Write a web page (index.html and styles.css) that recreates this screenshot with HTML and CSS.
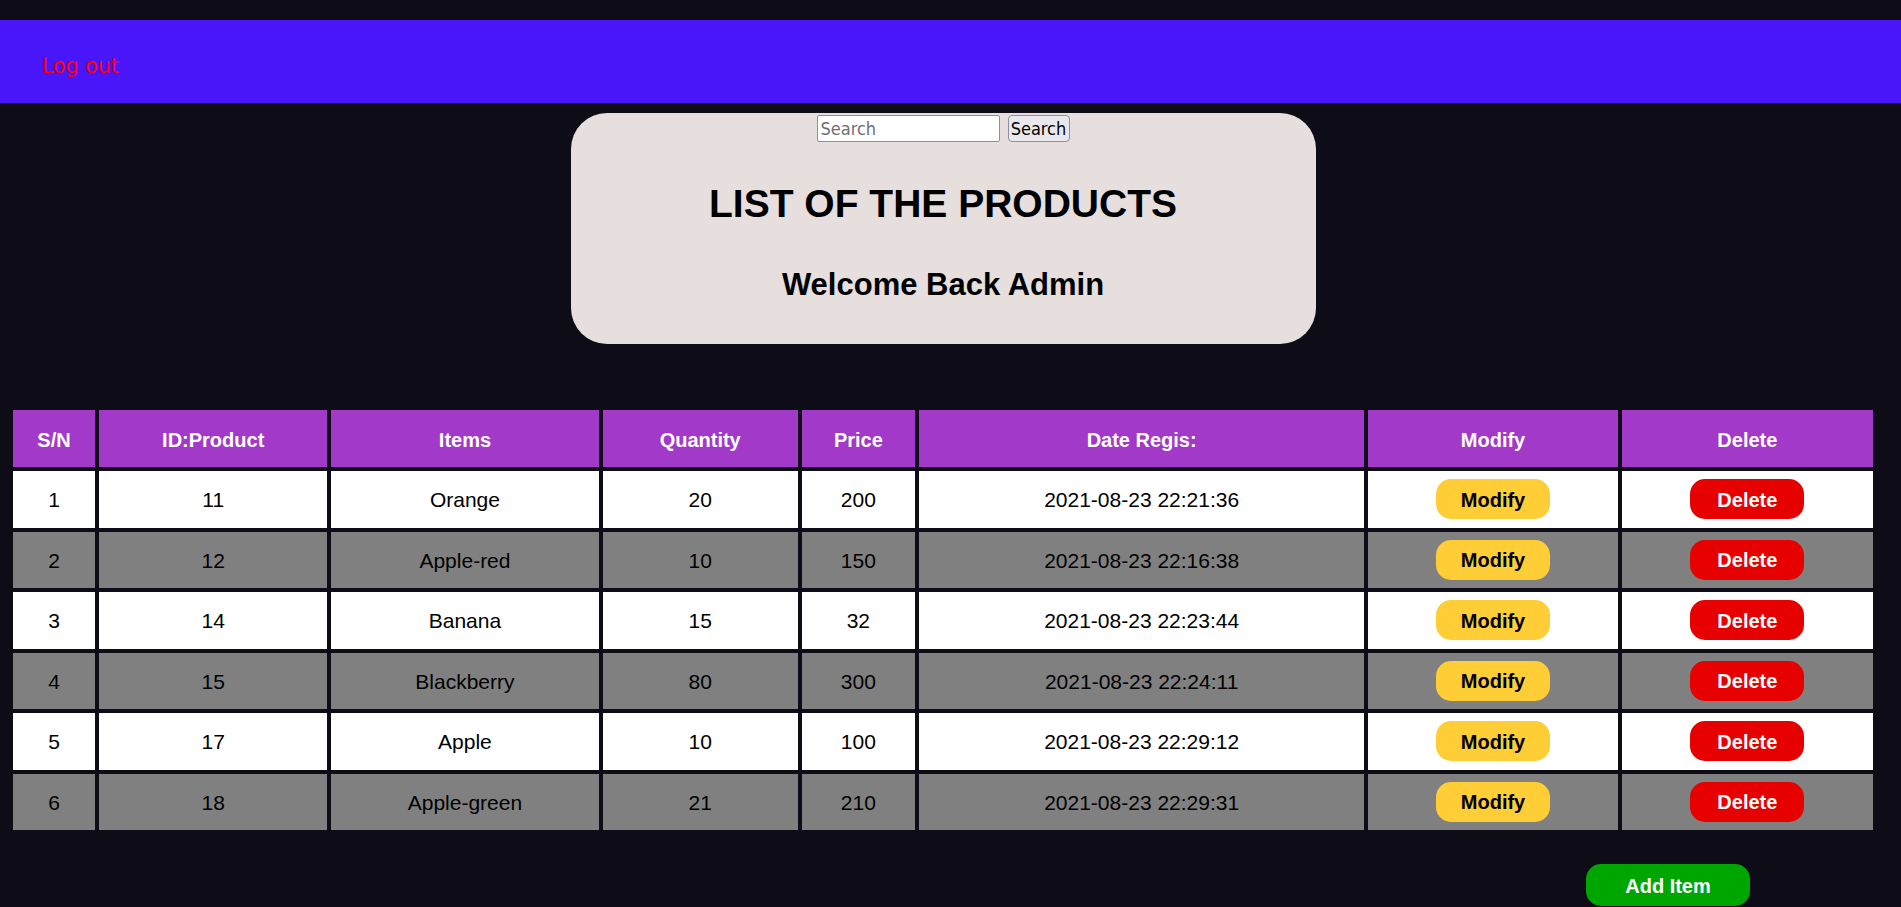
FILE: index.html
```html
<!DOCTYPE html>
<html lang="en">
<head>
<meta charset="utf-8">
<title>List of the products</title>
<link rel="stylesheet" href="styles.css">
</head>
<body>
<nav class="topbar">
  <a class="logout" href="#">Log out</a>
</nav>
<main class="page">
  <section class="card">
    <form class="search">
      <input class="search-input" type="text" placeholder="Search">
      <button class="search-btn" type="button">Search</button>
    </form>
    <h1 class="title">LIST OF THE PRODUCTS</h1>
    <h2 class="welcome">Welcome Back Admin</h2>
  </section>

  <table class="products">
    <colgroup>
      <col class="c-sn"><col class="c-id"><col class="c-items"><col class="c-qty">
      <col class="c-price"><col class="c-date"><col class="c-mod"><col class="c-del">
    </colgroup>
    <thead>
      <tr><th>S/N</th><th>ID:Product</th><th>Items</th><th>Quantity</th><th>Price</th><th>Date Regis:</th><th>Modify</th><th>Delete</th></tr>
    </thead>
    <tbody>
      <tr class="odd"><td>1</td><td>11</td><td>Orange</td><td>20</td><td>200</td><td>2021-08-23 22:21:36</td><td><span class="btn btn-mod">Modify</span></td><td><span class="btn btn-del">Delete</span></td></tr>
      <tr class="even"><td>2</td><td>12</td><td>Apple-red</td><td>10</td><td>150</td><td>2021-08-23 22:16:38</td><td><span class="btn btn-mod">Modify</span></td><td><span class="btn btn-del">Delete</span></td></tr>
      <tr class="odd"><td>3</td><td>14</td><td>Banana</td><td>15</td><td>32</td><td>2021-08-23 22:23:44</td><td><span class="btn btn-mod">Modify</span></td><td><span class="btn btn-del">Delete</span></td></tr>
      <tr class="even"><td>4</td><td>15</td><td>Blackberry</td><td>80</td><td>300</td><td>2021-08-23 22:24:11</td><td><span class="btn btn-mod">Modify</span></td><td><span class="btn btn-del">Delete</span></td></tr>
      <tr class="odd"><td>5</td><td>17</td><td>Apple</td><td>10</td><td>100</td><td>2021-08-23 22:29:12</td><td><span class="btn btn-mod">Modify</span></td><td><span class="btn btn-del">Delete</span></td></tr>
      <tr class="even"><td>6</td><td>18</td><td>Apple-green</td><td>21</td><td>210</td><td>2021-08-23 22:29:31</td><td><span class="btn btn-mod">Modify</span></td><td><span class="btn btn-del">Delete</span></td></tr>
    </tbody>
  </table>

  <div class="actions">
    <span class="btn btn-add">Add Item</span>
  </div>
</main>
</body>
</html>
```

FILE: styles.css
```css
html, body {
  margin: 0;
  padding: 0;
  height: 907px;
  overflow: hidden;
  background: #0e0c16;
}

body {
  padding-top: 20px;
  box-sizing: border-box;
  font-family: "Liberation Sans", Arial, sans-serif;
  font-size: 20px;
  color: #000;
}

.topbar {
  height: 83px;
  background: #4816f9;
  box-sizing: border-box;
  padding: 35px 0 0 42px;
}

.logout {
  font-family: "DejaVu Sans", Verdana, sans-serif;
  font-size: 20.5px;
  line-height: 23px;
  color: #ff0000;
  text-decoration: none;
}

.page {
  width: 1886px;
}

.card {
  width: 745px;
  height: 231px;
  margin: 10px auto 0;
  background: #e6dfde;
  border-radius: 36px;
  box-sizing: border-box;
  padding-top: 2px;
  text-align: center;
}

.search {
  display: flex;
  justify-content: center;
  gap: 8px;
  margin: 0;
  height: 27px;
}

.search-input {
  width: 183px;
  height: 27px;
  box-sizing: border-box;
  border: 1px solid #8f8f9d;
  border-radius: 2px;
  background: #fff;
  padding: 0 3px;
  font-family: "Liberation Sans Narrow", "DejaVu Sans Condensed", sans-serif;
  font-size: 18px;
}

.search-input::placeholder {
  color: #6f6f6f;
}

.search-btn {
  width: 62px;
  height: 27px;
  box-sizing: border-box;
  border: 1px solid #8f8f9d;
  border-radius: 4px;
  background: #e9e9ed;
  padding: 0;
  font-family: "Liberation Sans Narrow", "DejaVu Sans Condensed", sans-serif;
  font-size: 18px;
  color: #000;
}

.title {
  margin: 39px 0 0;
  font-size: 39px;
  line-height: 45px;
  font-weight: 700;
}

.welcome {
  margin: 41px 0 0;
  font-size: 31px;
  line-height: 36px;
  font-weight: 700;
}

.products {
  margin: 62px auto 0;
  width: 1868px;
  table-layout: fixed;
  border-collapse: separate;
  border-spacing: 4px;
}

.c-sn { width: 82px; }
.c-id { width: 228px; }
.c-items { width: 267px; }
.c-qty { width: 195px; }
.c-price { width: 113px; }
.c-date { width: 445px; }
.c-mod { width: 249px; }
.c-del { width: 251px; }

.products th,
.products td {
  padding: 0;
  text-align: center;
  vertical-align: middle;
}

.products th {
  height: 57px;
  box-sizing: border-box;
  padding-top: 4px;
  background: #a239c9;
  color: #fff;
  font-size: 20px;
  font-weight: 700;
}

.products td {
  height: 56.5px;
  box-sizing: border-box;
  padding-top: 2px;
  font-size: 21px;
}

.odd td { background: #ffffff; }
.even td { background: #808080; }

.btn {
  display: inline-flex;
  align-items: center;
  justify-content: center;
  box-sizing: border-box;
  height: 40px;
  width: 114px;
  padding-top: 2px;
  border-radius: 15px;
  font-weight: 700;
  font-size: 20px;
  vertical-align: middle;
}

.products td .btn {
  margin-top: -2px;
}

.btn-mod {
  background: #ffcd35;
  color: #000;
}

.btn-del {
  background: #e60000;
  color: #fff;
}

.actions {
  display: flex;
  justify-content: flex-end;
  padding-right: 136px;
  margin-top: 30px;
}

.btn-add {
  width: 164px;
  height: 42px;
  background: #00a600;
  color: #fff;
}
```
